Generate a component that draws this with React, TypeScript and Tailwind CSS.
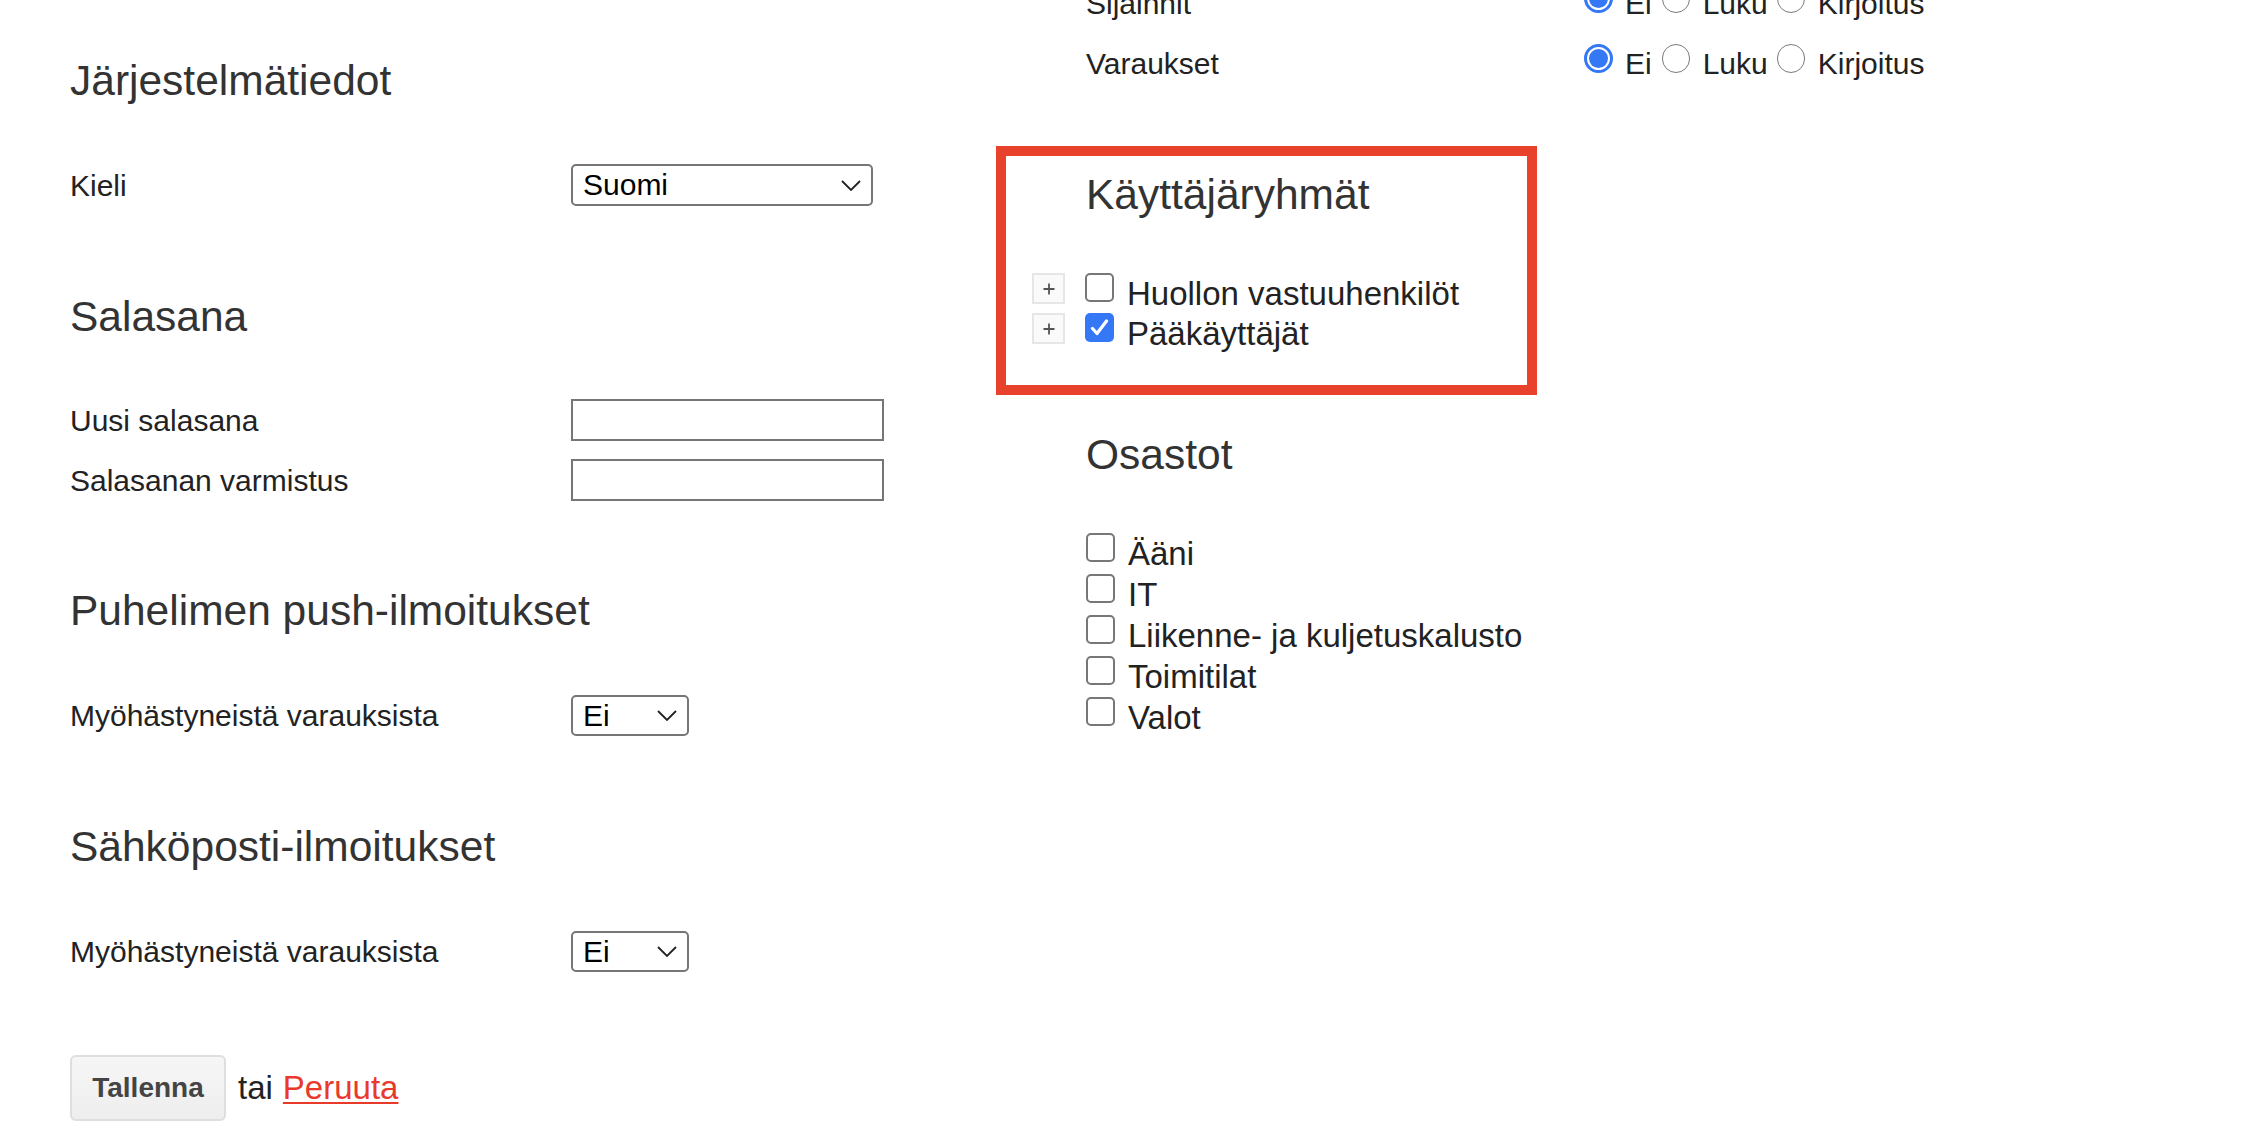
const FONT = "font-['Liberation_Sans',Arial,Helvetica,sans-serif]";

const Chevron = () => (
  <svg width="20" height="11" viewBox="0 0 20 11" className="shrink-0">
    <path d="M1 1l9 9 9-9" fill="none" stroke="#222" strokeWidth="1.8" />
  </svg>
);

const Select = ({ value, wide }: { value: string; wide?: boolean }) => (
  <div
    className={`flex items-center justify-between rounded-[5px] border-2 border-[#767676] bg-white pl-[10px] pr-[10px] text-[30px] leading-none text-black ${
      wide ? 'h-[42px] w-[302px]' : 'h-[41px] w-[118px]'
    }`}
  >
    <span>{value}</span>
    <Chevron />
  </div>
);

const TextInput = () => <input type="password" className="h-[42px] w-[313px] border-2 border-[#767676] bg-white outline-none" />;

const Radio = ({ checked, className = '' }: { checked?: boolean; className?: string }) =>
  checked ? (
    <span className={`flex h-[29px] w-[29px] shrink-0 items-center justify-center rounded-full border-[3px] border-[#3478f6] bg-white ${className}`}>
      <span className="block h-[19px] w-[19px] rounded-full bg-[#3478f6]" />
    </span>
  ) : (
    <span className={`block h-[29px] w-[28px] shrink-0 rounded-full border-[1.5px] border-[#7a7a7a] bg-white ${className}`} />
  );

const Checkbox = ({ checked }: { checked?: boolean }) =>
  checked ? (
    <span className="flex h-[29px] w-[29px] shrink-0 items-center justify-center rounded-[5px] bg-[#3478f6]">
      <svg width="19" height="17" viewBox="0 0 19 17">
        <path d="M2.5 9.5l4.5 5 9.5-12.5" fill="none" stroke="#fff" strokeWidth="3.2" strokeLinecap="round" strokeLinejoin="round" />
      </svg>
    </span>
  ) : (
    <span className="block h-[29px] w-[29px] shrink-0 rounded-[5px] border-2 border-[#777] bg-white" />
  );

const PlusBox = () => (
  <span className="flex h-[31px] w-[33px] shrink-0 items-center justify-center border-2 border-[#e6e6e6] bg-[#fafafa]">
    <svg width="12" height="12" viewBox="0 0 12 12">
      <path d="M6 0.5v11M0.5 6h11" stroke="#555" strokeWidth="1.8" />
    </svg>
  </span>
);

const Heading = ({ children, className = '' }: { children: React.ReactNode; className?: string }) => (
  <h2 className={`text-[42.5px] leading-[48px] font-normal text-[#333] ${className}`}>{children}</h2>
);

const FormRow = ({ label, children, className = '' }: { label: string; children: React.ReactNode; className?: string }) => (
  <div className={`flex items-center ${className}`}>
    <span className="w-[501px] text-[30px] text-[#222]">{label}</span>
    {children}
  </div>
);

const PermissionRow = ({ label, className = '' }: { label: string; className?: string }) => (
  <div className={`flex h-[40px] items-start text-[30px] leading-[40px] text-[#222] ${className}`}>
    <span className="w-[498px]">{label}</span>
    <div className="flex items-start">
      <Radio checked />
      <span className="ml-[12px]">Ei</span>
      <Radio className="ml-[10px]" />
      <span className="ml-[13px]">Luku</span>
      <Radio className="ml-[9px]" />
      <span className="ml-[13px]">Kirjoitus</span>
    </div>
  </div>
);

const CheckRow = ({ label, checked, plus, className = '' }: { label: string; checked?: boolean; plus?: boolean; className?: string }) => (
  <div className={`flex items-start text-[33px] leading-[41px] text-[#222] ${className}`}>
    {plus && (
      <span className="mr-[20px] flex">
        <PlusBox />
      </span>
    )}
    <Checkbox checked={checked} />
    <span className="ml-[13px]">{label}</span>
  </div>
);

export default function App() {
  const departments = ['Ääni', 'IT', 'Liikenne- ja kuljetuskalusto', 'Toimitilat', 'Valot'];

  return (
    <div className={`flex min-h-[1144px] overflow-hidden bg-white ${FONT}`}>
      {/* left column */}
      <div className="flex w-[1086px] shrink-0 flex-col pl-[70px]">
        <Heading className="mt-[57px]">Järjestelmätiedot</Heading>
        <FormRow label="Kieli" className="mt-[59px] h-[42px]">
          <Select value="Suomi" wide />
        </FormRow>

        <Heading className="mt-[87px]">Salasana</Heading>
        <FormRow label="Uusi salasana" className="mt-[58px] h-[42px]">
          <TextInput />
        </FormRow>
        <FormRow label="Salasanan varmistus" className="mt-[18px] h-[42px]">
          <TextInput />
        </FormRow>

        <Heading className="mt-[86px]">Puhelimen push-ilmoitukset</Heading>
        <FormRow label="Myöhästyneistä varauksista" className="mt-[60px] h-[41px]">
          <Select value="Ei" />
        </FormRow>

        <Heading className="mt-[87px]">Sähköposti-ilmoitukset</Heading>
        <FormRow label="Myöhästyneistä varauksista" className="mt-[60px] h-[41px]">
          <Select value="Ei" />
        </FormRow>

        <div className="mt-[83px] flex items-center">
          <button className="h-[66px] w-[156px] rounded-[6px] border-2 border-[#dedede] bg-gradient-to-b from-[#f6f6f6] to-[#eeeeee] text-[28px] font-bold text-[#444]">
            Tallenna
          </button>
          <span className="ml-[12px] text-[33px] text-[#222]">tai</span>
          <a href="#" className="ml-[10px] text-[33px] text-[#e8392b] underline decoration-2 underline-offset-[3px]">
            Peruuta
          </a>
        </div>
      </div>

      {/* right column */}
      <div className="flex flex-1 flex-col">
        <PermissionRow label="Sijainnit" className="-mt-[16px]" />
        <PermissionRow label="Varaukset" className="mt-[20px]" />

        <div className="-ml-[90px] mt-[62px] h-[249px] w-[541px] border-[10px] border-[#e8412c] pl-[26px] pt-[15px]">
          <Heading className="ml-[54px]">Käyttäjäryhmät</Heading>
          <div className="mt-[54px] flex flex-col">
            <CheckRow label="Huollon vastuuhenkilöt" plus className="h-[40px]" />
            <CheckRow label="Pääkäyttäjät" plus checked className="h-[40px]" />
          </div>
        </div>

        <Heading className="mt-[36px]">Osastot</Heading>
        <div className="mt-[54px] flex flex-col">
          {departments.map((d) => (
            <CheckRow key={d} label={d} className="h-[41px]" />
          ))}
        </div>
      </div>
    </div>
  );
}
